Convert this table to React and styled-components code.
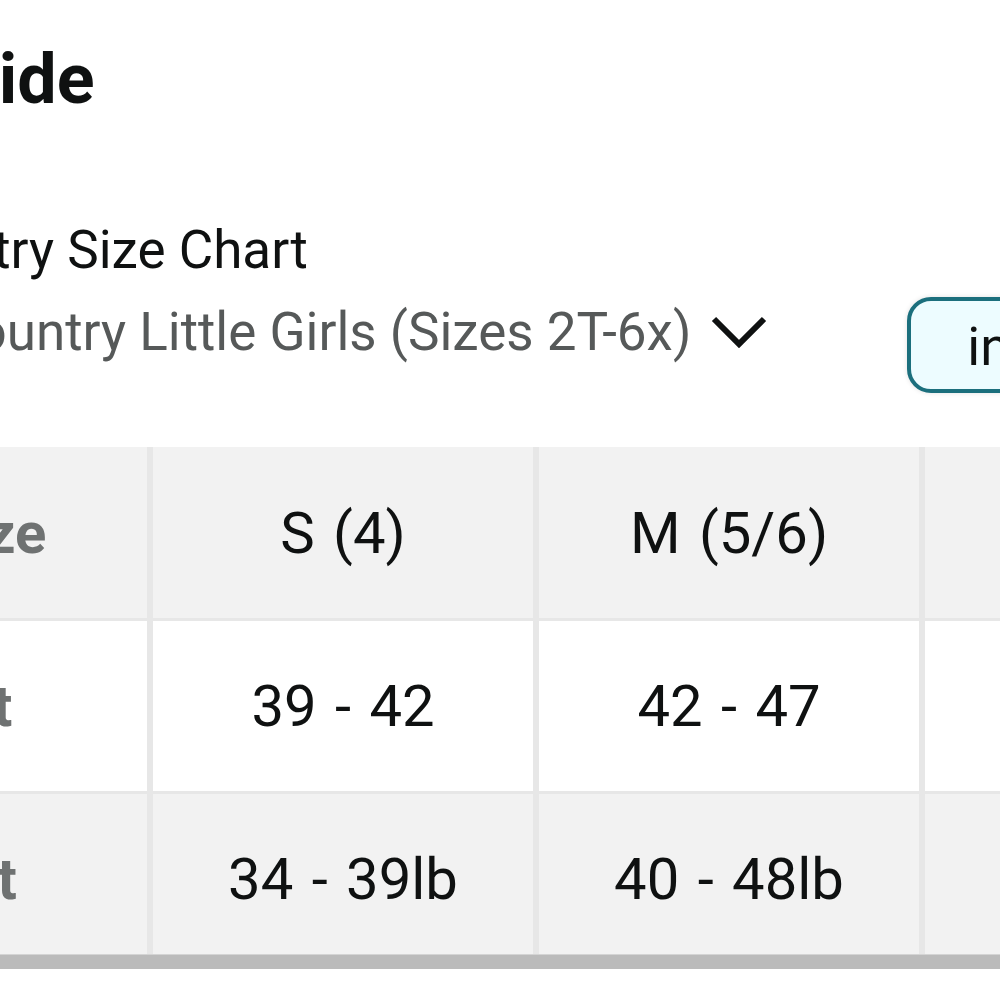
import React from 'react';
import styled, { createGlobalStyle } from 'styled-components';

const GlobalStyle = createGlobalStyle`
  html, body {
    margin: 0;
    padding: 0;
    background: #fff;
    overflow: hidden;
  }
  body {
    width: 1000px;
    height: 1000px;
    font-family: Roboto, "Noto Sans", "Liberation Sans", sans-serif;
    color: #0f1111;
  }
`;

// page is wider than the phone viewport, shifted so only the middle shows
const Page = styled.div`
  margin-left: -295px;
  width: 1700px;
  display: flex;
  flex-direction: column;
`;

const Title = styled.h1`
  margin: 37px 0 0;
  padding-left: 55px;
  font-size: 70px;
  line-height: 84px;
  font-weight: 700;
  color: #0f1111;
`;

const Label = styled.div`
  margin-top: 97px;
  padding-left: 165px;
  font-size: 53px;
  line-height: 64px;
  color: #0f1111;
`;

const Controls = styled.div`
  margin-top: 15px;
  display: flex;
  align-items: flex-start;
`;

const Select = styled.div`
  display: flex;
  align-items: center;
  gap: 20px;
  padding-top: 3px;
  padding-left: 237px;
  font-size: 53px;
  line-height: 64px;
  color: #565959;
  white-space: nowrap;
`;

const Chevron = () => (
  <svg width="56" height="32" viewBox="0 0 56 32">
    <polyline points="3,3 28,28 53,3" fill="none" stroke="#0f1111" strokeWidth="6" />
  </svg>
);

const UnitButton = styled.button`
  margin-left: 140px;
  padding: 14px 60px 10px 56px;
  border: 4px solid #1b6f7d;
  border-radius: 24px;
  background: #edfcff;
  box-shadow: 0 0 5px rgba(0, 0, 0, 0.12);
  font-family: inherit;
  font-size: 53px;
  line-height: 64px;
  color: #0f1111;
`;

const TableWrap = styled.div`
  position: relative;
  margin-top: 54px;
  width: max-content;
`;

const Table = styled.div`
  display: grid;
  grid-template-columns: 442px repeat(3, 380px);
  grid-template-rows: 171px 170px 170px;
  column-gap: 6px;
  row-gap: 3px;
  background: #e7e7e7;
`;

const Cell = styled.div`
  display: flex;
  align-items: center;
  justify-content: center;
  background: ${(p) => (p.$shade ? '#f2f2f2' : '#fff')};
  font-size: 58px;
  word-spacing: ${(p) => (p.$label ? 0 : 4)}px;
  font-weight: ${(p) => (p.$label ? 700 : 400)};
  color: ${(p) => (p.$label ? '#6f7272' : '#0f1111')};
  white-space: nowrap;
`;

const ScrollBar = styled.div`
  position: absolute;
  left: 0;
  right: 0;
  bottom: -5px;
  height: 14px;
  background: #bbbbbb;
  border-top: 1px solid #d4d4d4;
`;

const rows = [
  ['Kids Size', 'S (4)', 'M (5/6)', 'L (7)'],
  ['Height', '39 - 42', '42 - 47', '47 - 52'],
  ['Weight', '34 - 39lb', '40 - 48lb', '49 - 57lb'],
];

export default function App() {
  return (
    <>
      <GlobalStyle />
      <Page>
        <Title>Size Guide</Title>
        <Label>Country Size Chart</Label>
        <Controls>
          <Select>
            <span>Country Little Girls (Sizes 2T-6x)</span>
            <Chevron />
          </Select>
          <UnitButton>in</UnitButton>
        </Controls>
        <TableWrap>
          <Table>
            {rows.map((row, r) =>
              row.map((text, c) => (
                <Cell key={`${r}-${c}`} $shade={r !== 1} $label={c === 0}>
                  {text}
                </Cell>
              ))
            )}
          </Table>
          <ScrollBar />
        </TableWrap>
      </Page>
    </>
  );
}
